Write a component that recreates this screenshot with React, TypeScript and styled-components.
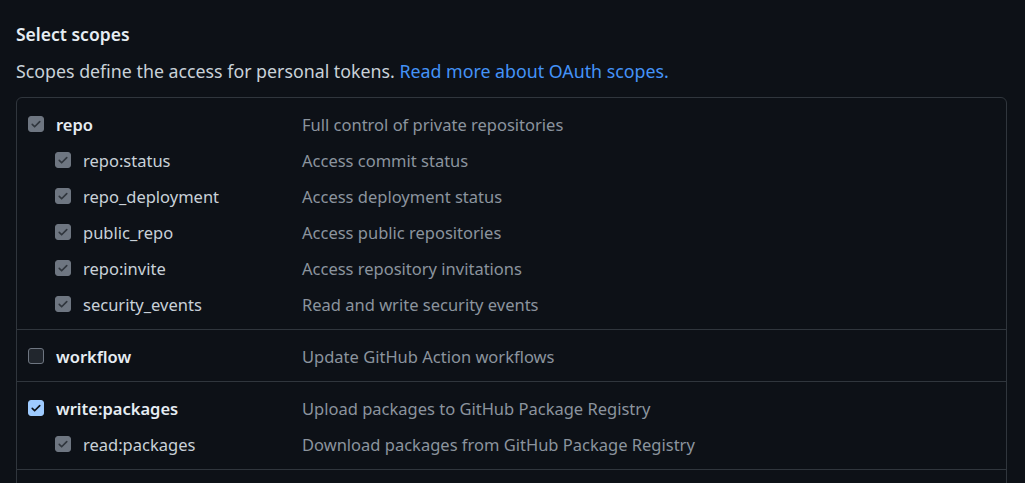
import styled, { createGlobalStyle } from 'styled-components';

const GlobalStyle = createGlobalStyle`
  html, body {
    margin: 0;
    padding: 0;
    background: #0d1117;
  }
  body {
    font-family: "Noto Sans", "Liberation Sans", sans-serif;
    color: #c9d1d9;
  }
`;

const StyledPage = styled.div`
  padding: 22px 18px 0 16px;
  height: 483px;
  overflow: hidden;
  box-sizing: border-box;
`;

const StyledHeading = styled.h2`
  margin: 0;
  font-size: 17.5px;
  font-weight: 600;
  line-height: 24px;
  color: #e6edf3;
`;

const StyledIntro = styled.p`
  margin: 13px 0 0;
  font-size: 17.8px;
  line-height: 24px;
  color: #c9d1d9;
`;

const StyledLink = styled.a`
  color: #4493f8;
  text-decoration: none;
`;

const StyledBox = styled.div`
  margin-top: 14px;
  border: 1px solid #30363d;
  border-radius: 6px;
`;

const StyledGroup = styled.div`
  padding: 8px 0 7px;
  border-top: 1px solid #30363d;
  min-height: 20px;

  &:first-child {
    border-top: none;
  }
`;

const StyledRow = styled.label<{ $nested?: boolean }>`
  display: grid;
  grid-template-columns: ${({ $nested }) => ($nested ? '28px 219px' : '28px 246px')} 1fr;
  align-items: center;
  height: 36px;
  padding-left: ${({ $nested }) => ($nested ? '38px' : '11px')};
`;

const StyledBoxMark = styled.span<{ $state: 'locked' | 'on' | 'off' }>`
  width: 16px;
  height: 16px;
  box-sizing: border-box;
  border-radius: 3px;
  display: flex;
  align-items: center;
  justify-content: center;
  background: ${({ $state }) =>
    $state === 'on' ? '#9ecbff' : $state === 'locked' ? '#6e7681' : '#21262d'};
  border: 1px solid ${({ $state }) => ($state === 'on' ? '#9ecbff' : '#6e7681')};
`;

const StyledName = styled.span<{ $nested?: boolean }>`
  font-size: 16.5px;
  font-weight: ${({ $nested }) => ($nested ? 400 : 600)};
  color: ${({ $nested }) => ($nested ? '#c9d1d9' : '#e6edf3')};
  white-space: nowrap;
`;

const StyledDescription = styled.span`
  font-size: 16.5px;
  color: #8b949e;
  white-space: nowrap;
`;

type Scope = {
  name: string;
  description: string;
  state: 'locked' | 'on' | 'off';
  nested?: boolean;
};

const groups: Scope[][] = [
  [
    { name: 'repo', description: 'Full control of private repositories', state: 'locked' },
    { name: 'repo:status', description: 'Access commit status', state: 'locked', nested: true },
    { name: 'repo_deployment', description: 'Access deployment status', state: 'locked', nested: true },
    { name: 'public_repo', description: 'Access public repositories', state: 'locked', nested: true },
    { name: 'repo:invite', description: 'Access repository invitations', state: 'locked', nested: true },
    { name: 'security_events', description: 'Read and write security events', state: 'locked', nested: true },
  ],
  [{ name: 'workflow', description: 'Update GitHub Action workflows', state: 'off' }],
  [
    { name: 'write:packages', description: 'Upload packages to GitHub Package Registry', state: 'on' },
    { name: 'read:packages', description: 'Download packages from GitHub Package Registry', state: 'locked', nested: true },
  ],
  [],
];

function CheckMark({ state }: { state: Scope['state'] }) {
  return (
    <StyledBoxMark $state={state}>
      {state !== 'off' && (
        <svg width="12" height="12" viewBox="0 0 16 16">
          <path
            d="M3 8.5l3.2 3.2L13 4.8"
            fill="none"
            stroke={state === 'on' ? '#0d1117' : '#30363d'}
            strokeWidth="2.2"
            strokeLinecap="round"
            strokeLinejoin="round"
          />
        </svg>
      )}
    </StyledBoxMark>
  );
}

export default function App() {
  return (
    <>
      <GlobalStyle />
      <StyledPage>
        <StyledHeading>Select scopes</StyledHeading>
        <StyledIntro>
          Scopes define the access for personal tokens.{' '}
          <StyledLink href="#">Read more about OAuth scopes.</StyledLink>
        </StyledIntro>
        <StyledBox>
          {groups.map((group, i) => (
            <StyledGroup key={i}>
              {group.map((scope) => (
                <StyledRow key={scope.name} $nested={scope.nested}>
                  <CheckMark state={scope.state} />
                  <StyledName $nested={scope.nested}>{scope.name}</StyledName>
                  <StyledDescription>{scope.description}</StyledDescription>
                </StyledRow>
              ))}
            </StyledGroup>
          ))}
        </StyledBox>
      </StyledPage>
    </>
  );
}
